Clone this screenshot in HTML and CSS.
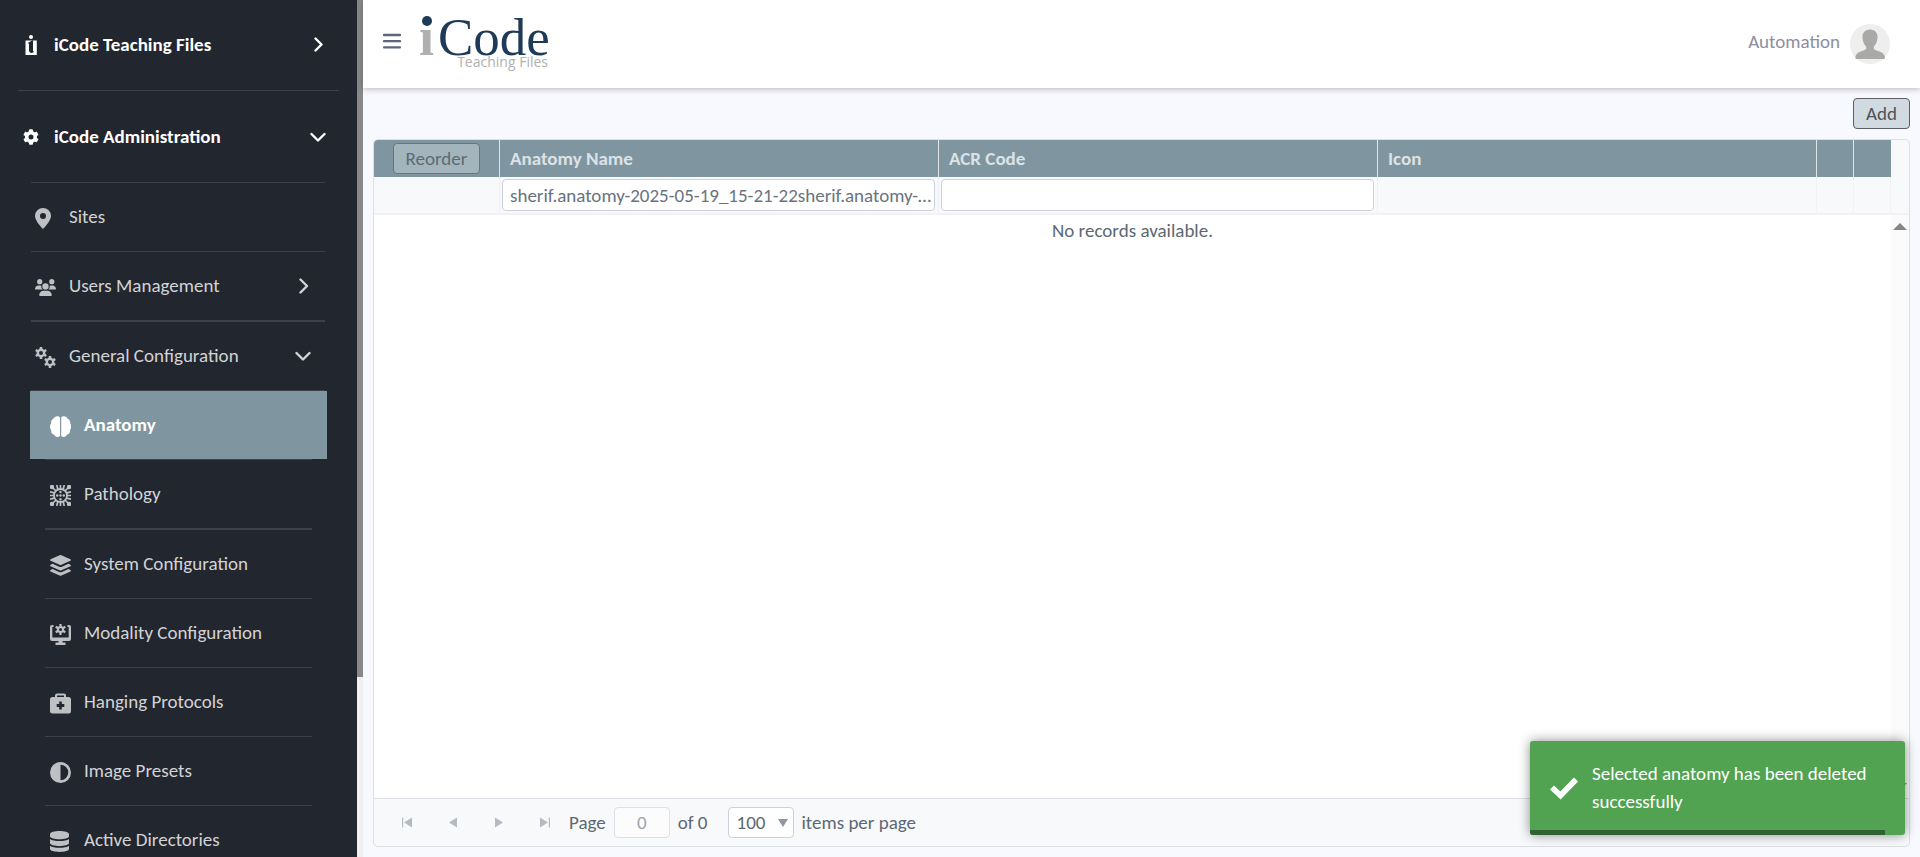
FILE: index.html
```html
<!DOCTYPE html>
<html lang="en">
<head>
<meta charset="utf-8">
<title>iCode Teaching Files</title>
<link rel="stylesheet" href="styles.css">
</head>
<body>
<div class="app">
  <div class="sidebar">
    <nav class="menu" aria-label="Main">
      <a class="top-item" href="#">
        <svg class="top-icon" viewBox="0 0 16 20" fill="#fff"><circle cx="8" cy="2" r="2"/><path d="M2.500 5.500H13.800V20H2.500Z"/><path d="M6 7.200 10 5v10.500c0 1 .5 1.200 1.200 1-1 2-5.200 2-5.200-1V8.800L4.800 8Z" fill="#22262e"/></svg>
        <span class="label">iCode Teaching Files</span>
        <svg class="chevron" viewBox="0 0 16 16"><path d="M5.500 1.500l6 6-6 6"/></svg>
      </a>
      <a class="top-item" href="#">
        <svg class="top-icon" viewBox="0 0 512 512" fill="#fff"><path d="M487 316l-43-25c4-23 4-47 0-70l43-25c5-3 7-9 5-14-11-36-30-68-55-95-4-4-10-5-15-2l-43 25c-18-16-39-28-61-36V25c0-6-4-11-9-12-37-8-74-8-109 0-6 1-9 6-9 12v49c-22 8-43 20-61 36L87 85c-5-3-11-2-15 2-25 27-44 59-55 95-2 5 1 11 5 14l43 25c-4 23-4 47 0 70l-43 25c-5 3-7 9-5 14 11 36 30 68 55 95 4 4 10 5 15 2l43-25c18 16 39 28 61 36v49c0 6 4 11 9 12 37 8 74 8 109 0 6-1 9-6 9-12v-49c22-8 43-20 61-36l43 25c5 3 11 2 15-2 25-27 44-59 55-95 2-5-1-11-6-14zM256 336a80 80 0 1 1 0-160 80 80 0 0 1 0 160z"/></svg>
        <span class="label">iCode Administration</span>
        <svg class="chevron" viewBox="0 0 16 16"><path d="M1.500 5l6.500 6.500L14.500 5"/></svg>
      </a>
      <div class="sub">
        <a class="item" href="#">
          <svg class="icon" viewBox="0 0 21 21"><path fill-rule="evenodd" d="M8 0a8 8 0 0 1 8 8c0 4-5 10-8 13C5 18 0 12 0 8a8 8 0 0 1 8-8Zm0 5a3 3 0 1 0 0 6 3 3 0 0 0 0-6Z"/></svg>
          <span class="label">Sites</span>
        </a>
        <a class="item" href="#">
          <svg class="icon" viewBox="0 0 640 512"><path d="M144 0a80 80 0 1 1 0 160 80 80 0 0 1 0-160zM512 0a80 80 0 1 1 0 160 80 80 0 0 1 0-160zM0 299c0-59 48-107 107-107h42c16 0 31 4 45 10-8 38 0 87 42 118H21c-12 0-21-10-21-21zM405 320c42-31 50-80 42-118 14-6 29-10 45-10h42c59 0 106 48 106 107 0 11-9 21-21 21zM224 224a96 96 0 1 1 192 0 96 96 0 0 1-192 0zM128 485c0-73 60-133 133-133h118c73 0 133 60 133 133 0 15-12 27-27 27H155c-15 0-27-12-27-27z"/></svg>
          <span class="label">Users Management</span>
          <svg class="chevron" viewBox="0 0 16 16"><path d="M5.500 1.500l6.500 6.500-6.500 6.500"/></svg>
        </a>
        <a class="item thick" href="#">
          <svg class="icon" viewBox="0 0 21 21"><g fill="none" stroke="currentColor"><circle cx="6" cy="6" r="3.200" stroke-width="2.400"/><g stroke-width="2.600"><path d="M6 0v2.500M6 9.500V12M.8 3l2.200 1.300M9 7.700 11.200 9M.8 9 3 7.700M9 4.300 11.200 3"/></g><circle cx="15" cy="15" r="3.200" stroke-width="2.400"/><g stroke-width="2.600"><path d="M15 9v2.500M15 18.500V21M9.800 12l2.200 1.300M18 16.700l2.200 1.300M9.800 18l2.200-1.300M18 13.300l2.200-1.300"/></g></g></svg>
          <span class="label">General Configuration</span>
          <svg class="chevron" viewBox="0 0 16 16"><path d="M1.500 5l6.500 6.500L14.500 5"/></svg>
        </a>
        <div class="subsub">
          <a class="item active" href="#" aria-current="page">
            <svg class="icon" viewBox="0 0 21 21"><path d="M10 1.500V20c-1.500 1.500-5 1.300-6-1.500C1.500 18 .8 15.500 1.300 14-.4 12.500-.4 9 1 7.500.8 5 2 3.300 3.500 2.800 4.500-.2 8.500-.7 10 1.500ZM11.200 1.500V20c1.500 1.500 5 1.300 6-1.500 2.500-.5 3.200-3 2.700-4.500 1.700-1.500 1.700-5 .3-6.500.2-2.500-1-4.200-2.500-4.700-1-3-5-3.500-6.500-1.300Z"/></svg>
            <span class="label">Anatomy</span>
          </a>
          <a class="item" href="#">
            <svg class="icon" viewBox="0 0 21 21"><circle cx="10.500" cy="10.500" r="6.500" fill="none" stroke="currentColor" stroke-width="1.800"/><g fill="none" stroke="currentColor" stroke-width="1.700"><path d="M2 2l4 4M19 2l-4 4M2 19l4-4M19 19l-4-4M10.500 0v4M10.500 17v4M0 10.500h4M17 10.500h4M6.800 0l1 4.500M14.200 0l-1 4.500M6.800 21l1-4.500M14.200 21l-1-4.500M0 6.800l4.500 1M0 14.200l4.500-1M21 6.800l-4.500 1M21 14.200l-4.500-1"/></g><circle cx="2" cy="2" r="2.200"/><circle cx="19" cy="2" r="2.200"/><circle cx="2" cy="19" r="2.200"/><circle cx="19" cy="19" r="2.200"/><circle cx="10.500" cy="7" r="1.200"/><circle cx="10.500" cy="10.500" r="1.200"/><circle cx="10.500" cy="14.200" r="1.200"/><circle cx="7.200" cy="10.500" r="1.200"/><circle cx="13.800" cy="10.500" r="1.200"/></svg>
            <span class="label">Pathology</span>
          </a>
          <a class="item thick" href="#">
            <svg class="icon" viewBox="0 0 21 21"><path d="M9.600.2q.9-.4 1.800 0l9 4q1.200.8 0 1.600l-9 4q-.9.400-1.800 0l-9-4q-1.200-.8 0-1.600ZM.6 9.700l2-.9 6.400 2.900q1.500.6 3 0l6.400-2.900 2 .9q1.200.8 0 1.600l-9 4q-.9.400-1.800 0l-9-4q-1.200-.8 0-1.600ZM.6 15l2-.9L9 17q1.500.6 3 0l6.400-2.900 2 .9q1.200.8 0 1.600l-9 4q-.9.400-1.800 0l-9-4q-1.200-.8 0-1.600Z"/></svg>
            <span class="label">System Configuration</span>
          </a>
          <a class="item" href="#">
            <svg class="icon" viewBox="0 0 21 21"><path d="M2 1h1.500v2H2.300v10.500h16.400V3H17.500V1H19q2 0 2 2v12q0 2-2 2h-6.500v1.500h3V21h-10v-2.500h3V17H2q-2 0-2-2V3Q0 1 2 1Z"/><g fill="none" stroke="currentColor"><circle cx="10.500" cy="5.500" r="2.500" stroke-width="2"/><path stroke-width="2.200" d="M10.500 0v3M10.500 8v3M5.700 2.700l2.500 1.500M12.800 6.800l2.500 1.500M5.700 8.300l2.500-1.500M12.800 4.200l2.500-1.500"/></g></svg>
            <span class="label">Modality Configuration</span>
          </a>
          <a class="item" href="#">
            <svg class="icon" viewBox="0 0 21 21"><path fill-rule="evenodd" d="M5 4V2.500Q5 .5 7 .5h7q2 0 2 2V4h2.500Q21 4 21 6.500v11.500q0 2.500-2.500 2.500h-16Q0 20.500 0 18V6.500Q0 4 2.500 4Zm2 0h7V2.500H7Zm2.200 4.500V11H6.700v3h2.500v2.500h2.600V14h2.500v-3h-2.500V8.500Z"/></svg>
            <span class="label">Hanging Protocols</span>
          </a>
          <a class="item" href="#">
            <svg class="icon" viewBox="0 0 21 21"><path fill-rule="evenodd" d="M10.500 0a10.500 10.500 0 1 1 0 21 10.500 10.500 0 0 1 0-21Zm0 2.700v15.600a7.800 7.800 0 0 0 0-15.600Z"/></svg>
            <span class="label">Image Presets</span>
          </a>
          <a class="item" href="#">
            <svg class="icon" viewBox="0 0 21 21"><path d="M0 3.200C0-1 19-1 19 3.200v2C19 9.200 0 9.200 0 5.200ZM0 8c3 2.700 16 2.700 19 0v4c0 4-19 4-19 0ZM0 14.800c3 2.700 16 2.700 19 0v3c0 4.200-19 4.200-19 0Z"/></svg>
            <span class="label">Active Directories</span>
          </a>
        </div>
      </div>
    </nav>
    <div class="side-track"><div class="side-thumb"></div></div>
  </div>

  <div class="main">
    <header class="header">
      <button class="burger" type="button" aria-label="Toggle menu"><svg width="18" height="16" viewBox="0 0 18 16"><path d="M1 2h16M1 8.200h16M1 14.400h16" fill="none" stroke="#5d6678" stroke-width="2.300" stroke-linecap="round"/></svg></button>
      <svg class="logo" width="132" height="60" viewBox="0 0 132 60" role="img" aria-label="iCode Teaching Files">
        <text class="logo-i" x="0" y="41">ı</text>
        <circle cx="8" cy="7" r="5" fill="#1f3a57"/>
        <text class="logo-name" x="19" y="41">Code</text>
        <text class="logo-sub" x="129" y="53" text-anchor="end">Teaching Files</text>
      </svg>
      <a class="user" href="#">
        <span>Automation</span>
        <svg width="40" height="40" viewBox="0 0 40 40"><circle cx="20" cy="20" r="20" fill="#eeeeee"/><path d="M20 5.500c5 0 8 3.500 7.500 8.500-.3 4-1.700 6.500-3.700 8.500v2.500c2.500 2.300 10.400 2.700 11 7.500v2.500H5.500V32.500c.6-4.800 8.200-5.200 10.700-7.500v-2.500c-2-2-3.400-4.500-3.700-8.500-.5-5 2.500-8.500 7.500-8.500Z" fill="#a9a9a7"/></svg>
      </a>
    </header>

    <main class="content">
      <div class="toolbar"><button class="btn" type="button">Add</button></div>
      <section class="grid">
        <div class="grid-content">
          <div class="grid-view">
            <table class="table">
              <colgroup><col class="c-order"><col><col><col><col class="c-act"><col class="c-act"></colgroup>
              <thead>
                <tr class="heads">
                  <th class="order"><button class="btn" type="button" disabled>Reorder</button></th>
                  <th>Anatomy Name</th><th>ACR Code</th><th>Icon</th><th></th><th></th>
                </tr>
                <tr class="filters">
                  <td></td>
                  <td><input class="filter" type="text" aria-label="Anatomy Name filter" value="sherif.anatomy-2025-05-19_15-21-22sherif.anatomy-2025-05-19_15-21-22"></td>
                  <td><input class="filter" type="text" aria-label="ACR Code filter"></td>
                  <td></td><td></td><td></td>
                </tr>
              </thead>
              <tbody><tr><td class="empty" colspan="6">No records available.</td></tr></tbody>
            </table>
          </div>
          <div class="rail">
            <div class="rail-head"></div>
            <div class="rail-track">
              <svg width="14" height="7" viewBox="0 0 14 7"><path d="M7 0l7 7H0z" fill="#858585"/></svg>
              <svg width="14" height="7" viewBox="0 0 14 7"><path d="M0 0h14L7 7z" fill="#858585"/></svg>
            </div>
          </div>
        </div>
        <footer class="pager">
          <button class="nav" type="button" disabled aria-label="First page"><svg viewBox="0 0 10 10"><path d="M0 0h1.200v10H0zM10 0v10L2 5z"/></svg></button>
          <button class="nav" type="button" disabled aria-label="Previous page"><svg viewBox="0 0 10 10"><path d="M9 0v10L1 5z"/></svg></button>
          <button class="nav" type="button" disabled aria-label="Next page"><svg viewBox="0 0 10 10"><path d="M1 0v10l8-5z"/></svg></button>
          <button class="nav" type="button" disabled aria-label="Last page"><svg viewBox="0 0 10 10"><path d="M8.800 0H10v10H8.800zM0 0v10l8-5z"/></svg></button>
          <label class="page-label" for="page">Page</label>
          <input class="page-no" id="page" type="text" value="0" disabled>
          <span class="total">of 0</span>
          <span class="sizes">
            <select id="size"><option>100</option></select>
            <svg width="10" height="8" viewBox="0 0 10 8"><path d="M0 0h10L5 8z" fill="#8f97a3"/></svg>
          </span>
          <label for="size">items per page</label>
        </footer>
      </section>
    </main>
  </div>

  <div class="toast" role="status">
    <svg width="30" height="23" viewBox="0 0 30 23"><path d="M3 10.500l8.500 8L27 2.500" fill="none" stroke="#fff" stroke-width="5.800"/></svg>
    <p>Selected anatomy has been deleted successfully</p>
    <div class="progress"></div>
  </div>
</div>
</body>
</html>
```

FILE: styles.css
```css
* { box-sizing: border-box; }

body {
  margin: 0;
  font-family: Carlito, Lato, "Liberation Sans", sans-serif;
  font-size: 19px;
  line-height: 24px;
  color: #5c6873;
  background: #f8f9fe;
}

button, input, select { font: inherit; color: inherit; margin: 0; }
a { color: inherit; text-decoration: none; }

.app { display: flex; height: 100vh; overflow: hidden; }

/* Sidebar */
.sidebar {
  display: flex;
  flex: none;
  width: 363px;
  background: #22262e;
  overflow: hidden;
}
.menu { flex: 1; padding: 0 18px; color: #d2d3d5; }
.side-track { width: 6px; background: #f0f0f0; }
.side-thumb { height: 79%; background: #888; }

.top-item, .item { display: flex; align-items: center; }
.label { flex: 1; }
.top-item {
  height: 92px;
  padding: 0 13px 0 5px;
  gap: 15px;
  color: #fff;
  font-weight: 700;
}
.top-item:first-child { height: 91px; border-bottom: 1px solid #3c4048; }
.top-icon { width: 16px; height: 20px; }
.chevron {
  width: 16px;
  height: 16px;
  fill: none;
  stroke: currentColor;
  stroke-width: 2.400;
  stroke-linecap: round;
  stroke-linejoin: round;
}

.sub { padding: 0 14px 0 13px; margin-top: -1px; }
.item {
  height: 69px;
  padding: 0 14px 0 4px;
  gap: 13px;
  border-top: 1px solid #3c4048;
}
.item.thick { height: 70px; border-top-width: 2px; }
.icon { width: 21px; height: 21px; fill: #bfc0c3; color: #bfc0c3; margin-top: 3px; }
.subsub { padding: 0 13px 0 14px; border-top: 1px solid #3c4048; }
.subsub .item { padding-left: 5px; }
.subsub .active {
  height: 68px;
  margin: 0 -15px;
  padding-left: 20px;
  border-top: 0;
  background: #7f96a1;
  color: #fff;
  font-weight: 700;
}
.active .icon { fill: #fff; }

/* Header */
.main { display: flex; flex: 1; flex-direction: column; min-width: 0; }
.header {
  display: flex;
  flex: none;
  align-items: center;
  height: 88px;
  padding: 0 30px 0 20px;
  background: #fff;
  box-shadow: 0 1px 6px rgba(60, 50, 60, .35);
}
.burger { display: flex; padding: 0; margin: 0 18px 6px 0; border: 0; background: none; }
.logo { overflow: visible; }
.logo-i { font: 700 54px "Liberation Serif", serif; fill: #b0b0b0; }
.logo-name { font: 53px "Liberation Serif", serif; fill: #1f3a57; }
.logo-sub { font: 14px "Open Sans", sans-serif; fill: #b0b0b0; }
.user { display: flex; align-items: center; gap: 10px; margin-left: auto; color: #8e8ea0; }
.user span { margin-bottom: 4px; }

/* Content */
.content { display: flex; flex: 1; flex-direction: column; min-height: 0; padding: 10px; }
.toolbar { display: flex; justify-content: flex-end; margin-bottom: 10px; }
.btn {
  height: 31px;
  padding: 0 12px;
  border: 1px solid #5c5f62;
  border-radius: 4px;
  background: #d1dae0;
  color: #4f5359;
}
.btn:disabled { opacity: .45; border-color: #4b5052; color: #30383c; }

.grid {
  display: flex;
  flex: 1;
  flex-direction: column;
  border: 1px solid #dcdfe6;
  border-radius: 5px;
  background: #f8f9fb;
  overflow: hidden;
}
.grid-content { display: flex; flex: 1; }
.grid-view { flex: 1; background: #fff; }
.table { width: 100%; table-layout: fixed; border-collapse: separate; border-spacing: 0; }
.c-order { width: 126px; }
.c-act { width: 37px; }
th, td { padding: 0; text-align: left; }
.heads th {
  height: 37px;
  padding: 0 10px;
  background: #7f96a1;
  color: #dce2e6;
  border-right: 1px solid #dfe5e8;
}
.heads th:last-child { border-right: 0; }
.heads .order { padding: 0; text-align: center; vertical-align: middle; }
.heads .btn { display: inline-block; font-weight: 400; vertical-align: middle; }
.filters td {
  height: 38px;
  padding: 0 3px 0 2px;
  background: #f8f9fb;
  border-right: 1px solid #f1f2f4;
  border-bottom: 2px solid #f2f2f4;
}
.filter {
  display: block;
  width: 100%;
  height: 32px;
  padding: 0 1px 0 7px;
  border: 1px solid #cfcfe2;
  border-radius: 4px;
  background: #fff;
  color: #69737e;
  text-overflow: ellipsis;
}
.table .empty { padding-top: 4px; text-align: center; }

.rail { display: flex; flex-direction: column; width: 18px; }
.rail-head { height: 75px; border-bottom: 2px solid #f2f2f4; }
.rail-track {
  display: flex;
  flex: 1;
  flex-direction: column;
  align-items: center;
  justify-content: space-between;
  padding: 8px 0;
  background: #fbfbfb;
}

.pager {
  display: flex;
  align-items: center;
  height: 48px;
  padding: 0 10px;
  border-top: 1px solid #dcdfe6;
}
.nav {
  display: flex;
  align-items: center;
  justify-content: center;
  width: 46px;
  height: 30px;
  padding: 0;
  border: 0;
  background: none;
}
.nav svg { width: 10px; height: 11px; fill: #b5bac1; }
.page-label { margin-left: 1px; }
.page-no {
  width: 56px;
  height: 31px;
  margin: 0 8px;
  border: 1px solid #dedfea;
  border-radius: 4px;
  background: #fcfcfd;
  color: #9ea4ac;
  text-align: center;
}
.sizes { position: relative; margin: 0 8px 0 20px; }
.sizes select {
  display: block;
  width: 66px;
  height: 31px;
  padding: 0 8px;
  appearance: none;
  border: 1px solid #cfcfe0;
  border-radius: 4px;
  background: #fff;
}
.sizes svg { position: absolute; top: 12px; right: 6px; pointer-events: none; }

/* Toast */
.toast {
  position: absolute;
  right: 15px;
  bottom: 22px;
  display: flex;
  align-items: center;
  gap: 13px;
  width: 375px;
  height: 94px;
  padding: 0 24px 0 19px;
  border-radius: 3px;
  background: #51a351;
  color: #fff;
  box-shadow: 0 0 12px rgba(0, 0, 0, .45);
  overflow: hidden;
}
.toast p { flex: 1; margin: 0; line-height: 28px; }
.progress { position: absolute; left: 0; bottom: 0; width: 355px; height: 5px; background: #316231; }
```
